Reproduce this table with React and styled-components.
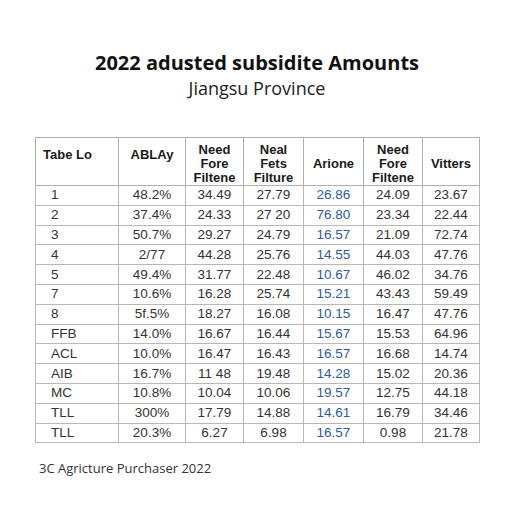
import React from 'react'
import styled, { createGlobalStyle } from 'styled-components'

const GlobalStyle = createGlobalStyle`
  html, body {
    margin: 0;
    padding: 0;
    background: #ffffff;
  }
`

const Page = styled.div`
  width: 512px;
  height: 512px;
  box-sizing: border-box;
  padding: 49px 33px 0 35px;
  display: flex;
  flex-direction: column;
  font-family: "Liberation Sans", Arial, sans-serif;
  color: #222;
`

const Title = styled.h1`
  margin: 0;
  text-align: center;
  font-family: "Open Sans", sans-serif;
  font-weight: 700;
  font-size: 20px;
  line-height: 28px;
  color: #111;
`

const Subtitle = styled.h2`
  margin: 0;
  text-align: center;
  font-family: "Open Sans", sans-serif;
  font-weight: 400;
  font-size: 18px;
  line-height: 22px;
  color: #222;
`

const Table = styled.table`
  margin-top: 38px;
  width: 445px;
  border-collapse: collapse;
  border: 1px solid #a8a8a8;
  font-size: 13.5px;
`

const HeadCell = styled.th`
  height: 48px;
  box-sizing: border-box;
  border: 1px solid #b0b0b0;
  font-weight: 700;
  font-size: 13px;
  line-height: 14px;
  color: #1a1a1a;
  vertical-align: ${({ $top }) => ($top ? 'top' : 'middle')};
  padding: ${({ $top }) => ($top ? '10px 4px 0' : '5px 4px 0')};
  text-align: ${({ $left }) => ($left ? 'left' : 'center')};
  padding-left: ${({ $left }) => ($left ? '7px' : '4px')};
`

const Cell = styled.td`
  height: 18.8px;
  padding: 0 4px;
  border: 1px solid #b8b8b8;
  line-height: 18px;
  color: ${({ $blue }) => ($blue ? '#2d5b9e' : '#333')};
  text-align: ${({ $left }) => ($left ? 'left' : 'center')};
  padding-left: ${({ $left }) => ($left ? '15px' : '4px')};
`

const Footer = styled.p`
  margin: 16px 0 0 4px;
  font-family: "Open Sans", sans-serif;
  font-size: 13px;
  color: #333;
`

const widths = [83, 67, 58, 60, 60, 59, 57]

const headers = [
  'Tabe Lo',
  'ABLAy',
  'Need Fore Filtene',
  'Neal Fets Filture',
  'Arione',
  'Need Fore Filtene',
  'Vitters'
]

const rows = [
  ['1', '48.2%', '34.49', '27.79', '26.86', '24.09', '23.67'],
  ['2', '37.4%', '24.33', '27 20', '76.80', '23.34', '22.44'],
  ['3', '50.7%', '29.27', '24.79', '16.57', '21.09', '72.74'],
  ['4', '2/77', '44.28', '25.76', '14.55', '44.03', '47.76'],
  ['5', '49.4%', '31.77', '22.48', '10.67', '46.02', '34.76'],
  ['7', '10.6%', '16.28', '25.74', '15.21', '43.43', '59.49'],
  ['8', '5f.5%', '18.27', '16.08', '10.15', '16.47', '47.76'],
  ['FFB', '14.0%', '16.67', '16.44', '15.67', '15.53', '64.96'],
  ['ACL', '10.0%', '16.47', '16.43', '16.57', '16.68', '14.74'],
  ['AIB', '16.7%', '11 48', '19.48', '14.28', '15.02', '20.36'],
  ['MC', '10.8%', '10.04', '10.06', '19.57', '12.75', '44.18'],
  ['TLL', '300%', '17.79', '14.88', '14.61', '16.79', '34.46'],
  ['TLL', '20.3%', '6.27', '6.98', '16.57', '0.98', '21.78']
]

const HeadLabel = ({ text }) => {
  const words = text.split(' ')
  if (words.length < 3) return text
  return words.map((w, i) => (
    <React.Fragment key={i}>
      {w}
      {i < words.length - 1 && <br />}
    </React.Fragment>
  ))
}

const App = () => {
  return (
    <>
      <GlobalStyle />
      <Page>
        <Title>2022 adusted subsidite Amounts</Title>
        <Subtitle>Jiangsu Province</Subtitle>
        <Table>
          <colgroup>
            {widths.map((w, i) => (
              <col key={i} style={{ width: w }} />
            ))}
          </colgroup>
          <thead>
            <tr>
              {headers.map((h, i) => (
                <HeadCell key={i} $left={i === 0} $top={i < 2}>
                  <HeadLabel text={h} />
                </HeadCell>
              ))}
            </tr>
          </thead>
          <tbody>
            {rows.map((row, r) => (
              <tr key={r}>
                {row.map((v, c) => (
                  <Cell key={c} $left={c === 0} $blue={c === 4}>
                    {v}
                  </Cell>
                ))}
              </tr>
            ))}
          </tbody>
        </Table>
        <Footer>3C Agricture Purchaser 2022</Footer>
      </Page>
    </>
  )
}

export default App
